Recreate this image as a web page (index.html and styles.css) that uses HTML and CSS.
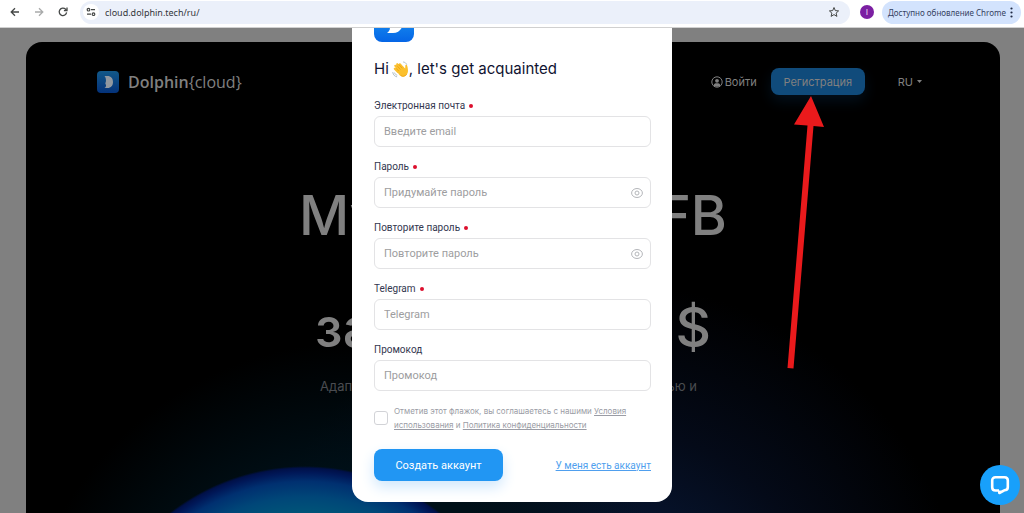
FILE: index.html
```html
<!DOCTYPE html>
<html lang="ru">
<head>
  <meta charset="UTF-8">
  <meta name="viewport" content="width=device-width, initial-scale=1.0">
  <title>Dolphin{cloud}</title>
  <link rel="stylesheet" href="styles.css">
</head>
<body>
  <!-- Browser bar -->
  <div class="toolbar">
    <div class="nav-buttons">
      <button type="button" aria-label="Назад">
        <svg width="10" height="10" viewBox="0 0 10 10" fill="none" stroke="#444746" stroke-width="1.3"><path d="M9 5H1.5M5 1.2L1.2 5L5 8.8"/></svg>
      </button>
      <button type="button" aria-label="Вперёд">
        <svg width="10" height="10" viewBox="0 0 10 10" fill="none" stroke="#a9abab" stroke-width="1.3"><path d="M1 5H8.5M5 1.2L8.8 5L5 8.8"/></svg>
      </button>
      <button type="button" aria-label="Обновить">
        <svg width="10" height="10" viewBox="0 0 10 10" fill="none" stroke="#444746" stroke-width="1.3"><path d="M8.6 5.3A3.7 3.7 0 1 1 7.6 2.3L8.6 3.4"/><path d="M9 .6V3.7H5.9"/></svg>
      </button>
    </div>
    <div class="address">
      <button type="button" class="site-info" aria-label="Сведения о сайте">
        <svg width="10" height="10" viewBox="0 0 10 10" fill="none" stroke="#444746" stroke-width="1.2"><circle cx="2.5" cy="2.7" r="1.3"/><path d="M5 2.7H9M1 7.2H5"/><circle cx="7.5" cy="7.2" r="1.3"/></svg>
      </button>
      <input type="text" class="url" aria-label="Адрес" value="cloud.dolphin.tech/ru/">
      <button type="button" aria-label="Добавить в закладки">
        <svg width="12" height="12" viewBox="0 0 12 12" fill="none" stroke="#444746" stroke-width="1"><path d="M6 1.5L7.3 4.6L10.6 4.9L8.1 7.1L8.9 10.4L6 8.6L3.1 10.4L3.9 7.1L1.4 4.9L4.7 4.6Z"/></svg>
      </button>
    </div>
    <button type="button" class="avatar">I</button>
    <button type="button" class="update">
      Доступно обновление Chrome
      <svg width="3" height="11" viewBox="0 0 3 11" fill="#1f2a44"><circle cx="1.5" cy="1.5" r="1.1"/><circle cx="1.5" cy="5.5" r="1.1"/><circle cx="1.5" cy="9.5" r="1.1"/></svg>
    </button>
  </div>

  <div class="page">
    <main class="hero">
      <header class="header">
        <a href="#" class="brand">
          <svg width="22" height="22" viewBox="0 0 22 22">
            <defs><linearGradient id="brand-bg" x1="0" y1="0" x2="0" y2="1"><stop offset="0" stop-color="#125888"/><stop offset="1" stop-color="#04327a"/></linearGradient></defs>
            <rect width="22" height="22" rx="4" fill="url(#brand-bg)"/>
            <path d="M7.5 5H10.5C14 5 16 7.5 16 11C16 14.5 14 17 10.5 17H7.5C9 16 9.3 15 8.8 13.5C8.2 12.5 8.2 12 8.8 11C9.3 9 8.8 6.5 7.5 5Z" fill="#9198a0"/>
          </svg>
          <span><b>Dolphin</b>{cloud}</span>
        </a>
        <nav class="menu">
          <a href="#" class="login">
            <svg width="12" height="12" viewBox="0 0 12 12" fill="none" stroke="#808080"><circle cx="6" cy="6" r="5.2"/><circle cx="6" cy="4.8" r="1.9" fill="#808080" stroke="none"/><path d="M2.6 9.5C3 7.5 4.5 7.3 6 7.3C7.5 7.3 9 7.5 9.4 9.5C7.8 11 4.2 11 2.6 9.5Z" fill="#808080" stroke="none"/></svg>
            Войти
          </a>
          <button type="button" class="register">Регистрация</button>
          <button type="button" class="lang">RU
            <svg width="5" height="3" viewBox="0 0 5 3"><path d="M0 0H5L2.5 3Z" fill="#808080"/></svg>
          </button>
        </nav>
      </header>
      <h1 class="title">
        <span class="title-line wide"><span>Му</span> <span>FB</span></span>
        <span class="title-line"><span>за</span> <span>$</span></span>
      </h1>
      <p class="subtitle"><span>Адап</span> <span>ью и</span></p>
    </main>

    <!-- Signup Form -->
    <div class="overlay">
      <form class="modal">
        <svg class="modal-logo" width="40" height="40" viewBox="0 0 40 40">
          <defs><linearGradient id="logo-bg" x1="0" y1="0" x2="0" y2="1"><stop offset="0" stop-color="#22a7f5"/><stop offset="1" stop-color="#0565e6"/></linearGradient></defs>
          <rect width="40" height="40" rx="8" fill="url(#logo-bg)"/>
          <path d="M13 9H19C25.5 9 29 13.5 29 20C29 26.5 25 31 19 31H13C15.5 29.5 16.5 27 15.5 25C14.5 23 14.5 21 15.5 19C16.5 15 15.5 11.5 13 9Z" fill="#fff"/>
        </svg>
        <h2>Hi
          <svg width="17" height="17" viewBox="0 0 17 17" fill="none" stroke-linecap="round">
            <path d="M6 11L2.8 7.8M7.5 9L3.3 4.8M9 7.5L5.2 3.2M11 7L7.8 3.3" stroke="#fbc02d" stroke-width="2.2"/>
            <path d="M4 9L7 13.5C9 16 12 16.3 14 14.5C16.5 12 16.3 9.5 15.3 5C15 3.3 13.3 3.6 13.3 5.2L13.2 7.5L10.5 5L5 6Z" fill="#fbc02d"/>
            <path d="M6.5 9.7L3.7 6.9M8.2 8.2L4.8 4.6M10 7L7.2 3.9M9 14.8C11 16 13 15.5 14.5 13.5" stroke="#e59600" stroke-width=".6"/>
            <path d="M11.5 1C13 1.3 14 2 14.6 3.3M.8 11.5C1.2 13.8 2.5 15.3 4.7 15.8M2.7 12C3.1 13.2 3.7 13.8 4.9 14.1" stroke="#b0bec5"/>
          </svg>, let's get acquainted</h2>

        <div class="field">
          <label for="email">Электронная почта <i class="dot"></i></label>
          <input type="email" id="email" placeholder="Введите email">
        </div>
        <div class="field">
          <label for="password">Пароль <i class="dot"></i></label>
          <div class="password-box">
            <input type="password" id="password" placeholder="Придумайте пароль">
            <button type="button" aria-label="Показать пароль">
              <svg width="12" height="12" viewBox="0 0 12 12" fill="none" stroke="#b4b6ba"><path d="M.6 6C.6 3.5 3 1.5 6 1.5S11.4 3.5 11.4 6C11.4 8.500 9 10.5 6 10.5S.6 8.5 .6 6Z"/><circle cx="6" cy="6" r="2"/></svg>
            </button>
          </div>
        </div>
        <div class="field">
          <label for="repeat">Повторите пароль <i class="dot"></i></label>
          <div class="password-box">
            <input type="password" id="repeat" placeholder="Повторите пароль">
            <button type="button" aria-label="Показать пароль">
              <svg width="12" height="12" viewBox="0 0 12 12" fill="none" stroke="#b4b6ba"><path d="M.6 6C.6 3.5 3 1.5 6 1.5S11.4 3.5 11.4 6C11.4 8.5 9 10.5 6 10.5S.6 8.5 .6 6Z"/><circle cx="6" cy="6" r="2"/></svg>
            </button>
          </div>
        </div>
        <div class="field">
          <label for="telegram">Telegram <i class="dot"></i></label>
          <input type="text" id="telegram" placeholder="Telegram">
        </div>
        <div class="field">
          <label for="promo">Промокод</label>
          <input type="text" id="promo" placeholder="Промокод">
        </div>

        <div class="consent">
          <input type="checkbox" id="agree">
          <label for="agree">Отметив этот флажок, вы соглашаетесь с нашими <a href="#">Условия<br>использования</a> и <a href="#">Политика конфиденциальности</a></label>
        </div>
        <div class="actions">
          <button type="submit" class="submit">Создать аккаунт</button>
          <a href="#">У меня есть аккаунт</a>
        </div>
      </form>
    </div>

    <svg class="arrow" width="38" height="274" viewBox="0 0 38 274" fill="#ea1a1c"><path d="M24 0L37 31L26.5 30L6.5 272.5L.5 272L20.5 29.5L7 28.5Z"/></svg>

    <button type="button" class="chat" aria-label="Чат">
      <svg width="20" height="20" viewBox="0 0 20 20" fill="none" stroke="#fff" stroke-width="2.6" stroke-linejoin="round"><path d="M9 15.5H5.5C3.5 15.5 2.2 14.2 2.2 12.3V5.5C2.2 3.5 3.5 2.3 5.5 2.3H14.5C16.5 2.3 17.8 3.5 17.8 5.5V12.3C17.8 14.2 16.5 15.3 14.3 15.3L9.3 18V15.5"/></svg>
    </button>
  </div>
</body>
</html>
```
FILE: styles.css
```css
* {
  box-sizing: border-box;
}

body {
  margin: 0;
  height: 100vh;
  display: flex;
  flex-direction: column;
  overflow: hidden;
  font-family: Inter, sans-serif;
  background: #808080;
}

button {
  border: none;
  padding: 0;
  background: none;
  font-family: inherit;
  cursor: pointer;
}

svg {
  display: block;
  flex: none;
}

/* browser bar */
.toolbar {
  display: flex;
  align-items: center;
  height: 28px;
  padding: 0 3px 3px 10px;
  background: #fff;
  border-bottom: 1px solid #d0d0d0;
}

.nav-buttons {
  display: flex;
  gap: 14px;
  margin-right: 12px;
}

.address {
  flex: 1;
  display: flex;
  align-items: center;
  height: 23px;
  padding: 0 10px 0 3px;
  border-radius: 12px;
  background: #ebf0fa;
}

.site-info {
  display: flex;
  align-items: center;
  justify-content: center;
  width: 16px;
  height: 16px;
  margin-right: 6px;
  border-radius: 50%;
  background: #fff;
}

.url {
  flex: 1;
  padding: 0;
  border: none;
  background: none;
  font-family: "Noto Sans", sans-serif;
  font-size: 9px;
  color: #33363b;
}

.avatar {
  width: 14px;
  height: 14px;
  margin: 0 8px 0 10px;
  border-radius: 50%;
  background: #7b1fa2;
  color: #fff;
  font-size: 7px;
}

.update {
  display: flex;
  align-items: center;
  gap: 4px;
  height: 23px;
  padding: 0 8px 0 6px;
  border-radius: 12px;
  background: #d3e3fd;
  color: #33415f;
  font-family: "Noto Sans", sans-serif;
  font-size: 8px;
  white-space: nowrap;
}

/* landing page */
.page {
  position: relative;
  flex: 1;
  min-height: 0;
  display: flex;
  padding: 14px 24px 0 26px;
}

.hero {
  flex: 1;
  overflow: hidden;
  border-radius: 16px 16px 0 0;
  background:
    radial-gradient(circle 220px at 279px 644px, #005c78 0%, #005578 78%, #004678 86%, #003070 93%, #001858 97%, #001048 99%, transparent 100%),
    radial-gradient(circle 340px at 330px 640px, #001018 60%, transparent 100%),
    radial-gradient(circle 360px at 580px 600px, #0a2048 0%, #040a18 60%, transparent 100%),
    #000;
}

.header {
  display: flex;
  align-items: center;
  justify-content: space-between;
  padding: 26px 78px 0 71px;
  color: #808080;
}

.brand {
  display: flex;
  align-items: center;
  gap: 9px;
  color: #808080;
  font-family: "Open Sans", sans-serif;
  font-size: 16px;
  text-decoration: none;
}

.brand b {
  font-weight: 600;
}

.menu {
  display: flex;
  align-items: center;
  font-size: 11px;
}

.login {
  display: flex;
  align-items: center;
  gap: 2px;
  margin-right: 14px;
  color: #808080;
  text-decoration: none;
}

.register {
  width: 94px;
  height: 27px;
  margin-right: 33px;
  border-radius: 8px;
  background: #104b7b;
  box-shadow: 0 6px 14px #03101c;
  color: #808080;
  font-size: 11px;
}

.lang {
  display: flex;
  align-items: center;
  gap: 4px;
  color: #808080;
  font-size: 11px;
}

.title {
  display: flex;
  flex-direction: column;
  align-items: center;
  margin: 64px 0 0;
  color: #808080;
  font-size: 55px;
  font-weight: 500;
  line-height: 112px;
}

.title-line {
  display: flex;
  justify-content: space-between;
  width: 396px;
}

.title-line.wide {
  width: 428px;
}

.subtitle {
  display: flex;
  justify-content: space-between;
  width: 386px;
  margin: -6px auto 0;
  padding-right: 9px;
  color: #4a4c50;
  font-size: 13px;
  line-height: 18px;
}

/* signup form */
.overlay {
  position: absolute;
  inset: 0;
  display: flex;
  align-items: flex-end;
  justify-content: center;
  padding-bottom: 11px;
  overflow: hidden;
}

.modal {
  width: 320px;
  padding: 22px 21px 21px 22px;
  border-radius: 16px;
  background: #fff;
}

.modal h2 {
  display: flex;
  align-items: center;
  margin: 17px 0 20px;
  color: #101331;
  font-size: 15px;
  font-weight: 400;
  line-height: 20px;
}

.modal h2 svg {
  margin-left: 3px;
}

.field {
  display: flex;
  flex-direction: column;
  gap: 3px;
  margin-bottom: 13px;
}

.field label {
  display: flex;
  align-items: center;
  gap: 4px;
  color: #33374f;
  font-family: Roboto, sans-serif;
  font-size: 10px;
  line-height: 14px;
}

.dot {
  width: 4px;
  height: 4px;
  border-radius: 50%;
  background: #dc0f2d;
}

.field input {
  width: 100%;
  height: 31px;
  padding: 0 9px;
  border: 1px solid #e3e3e5;
  border-radius: 6px;
  background: #fff;
  font-family: Roboto, sans-serif;
  font-size: 11px;
}

.field input::placeholder {
  color: #9d9da0;
}

.password-box {
  position: relative;
}

.password-box button {
  position: absolute;
  top: 10px;
  right: 8px;
}

.consent {
  display: flex;
  align-items: center;
  gap: 6px;
  margin-bottom: 17px;
  color: #9a9ca5;
  font-size: 8px;
  line-height: 14px;
  white-space: nowrap;
}

.consent input {
  appearance: none;
  width: 14px;
  height: 14px;
  margin: 0;
  border: 1px solid #d2d3d7;
  border-radius: 3px;
}

.consent a {
  color: inherit;
}

.actions {
  display: flex;
  align-items: center;
  justify-content: space-between;
  font-family: Roboto, sans-serif;
  font-size: 10px;
}

.actions a {
  color: #4f9fee;
}

.submit {
  width: 129px;
  height: 32px;
  border-radius: 8px;
  background: #2196f3;
  box-shadow: 0 6px 14px #cfe7fc;
  color: #fff;
  font-size: 11px;
}

/* pointer to the register button */
.arrow {
  position: absolute;
  top: 68px;
  right: 199px;
}

.chat {
  position: absolute;
  right: 4px;
  bottom: 8px;
  display: flex;
  align-items: center;
  justify-content: center;
  width: 40px;
  height: 40px;
  border-radius: 50%;
  background: #18a0fb;
}
```
